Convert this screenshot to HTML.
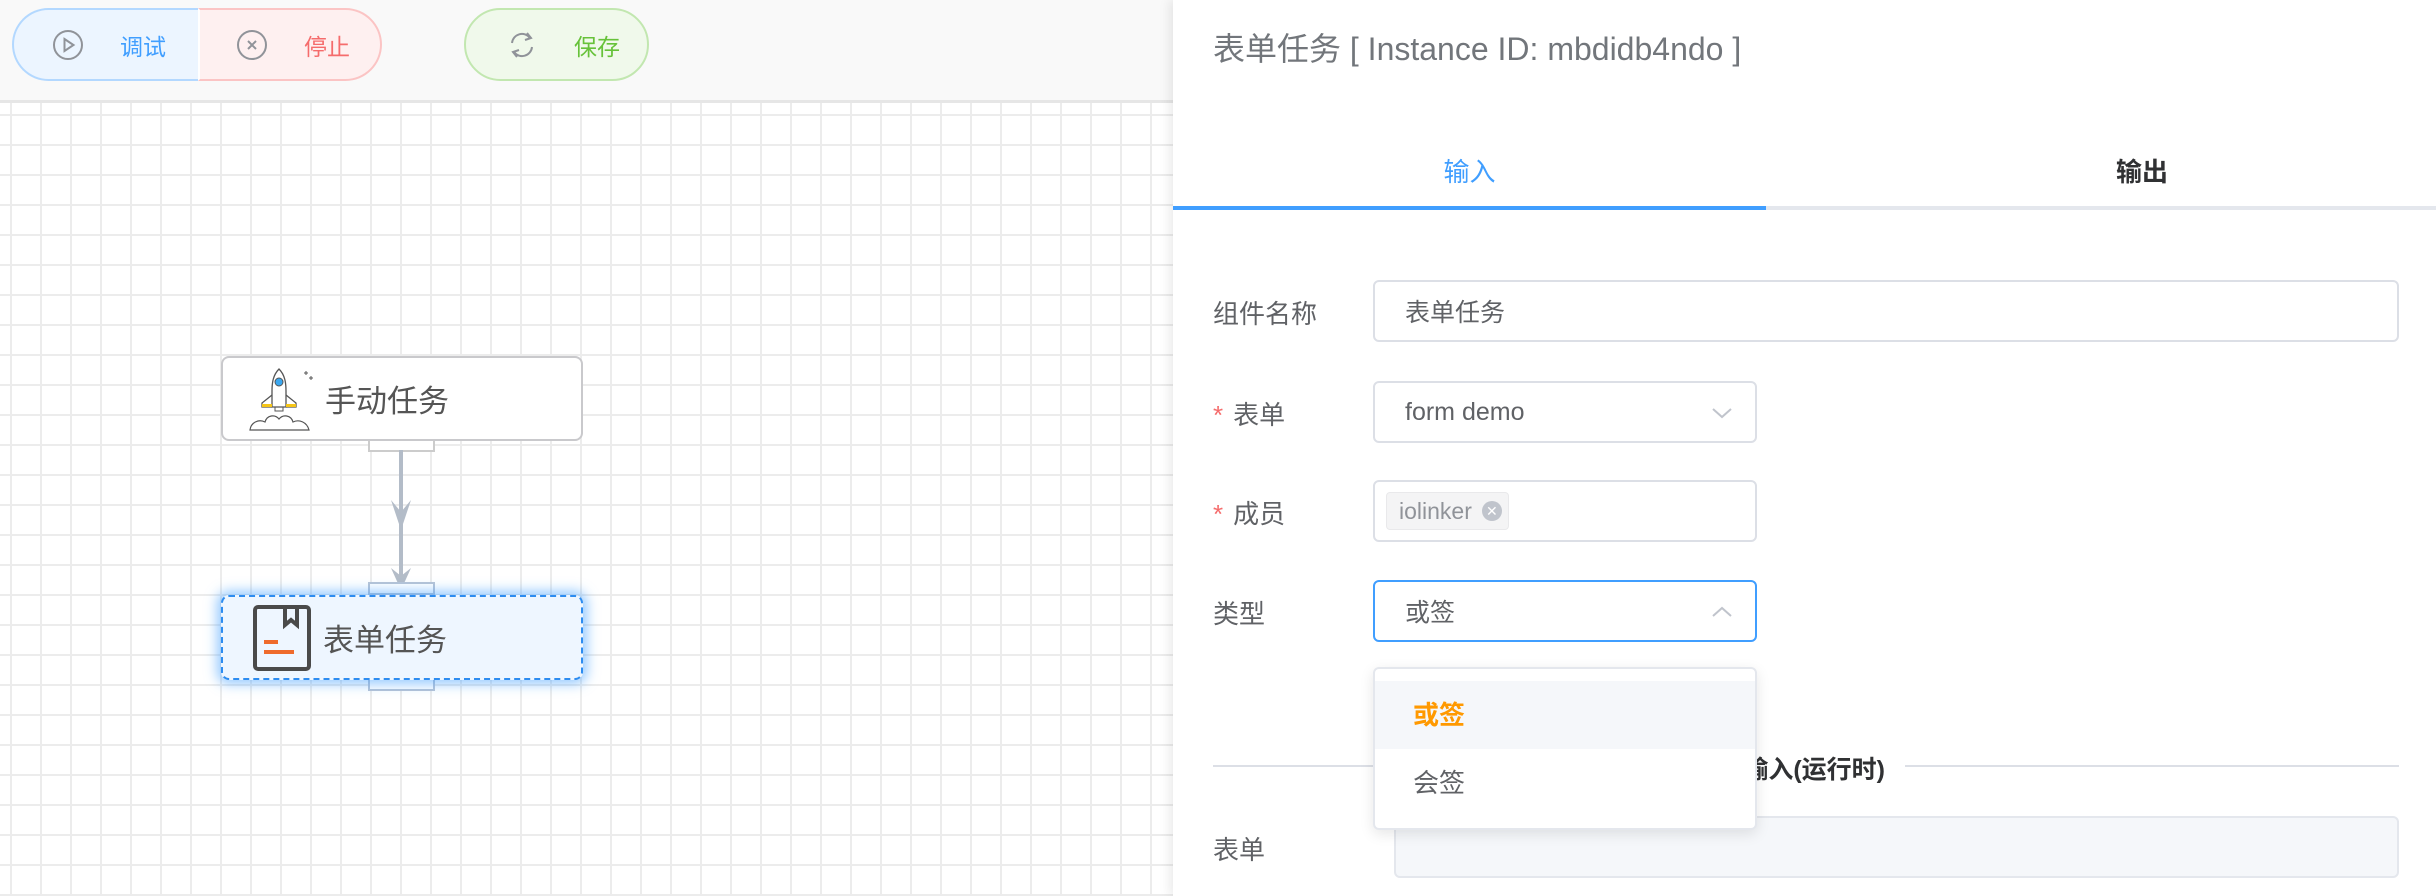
<!DOCTYPE html>
<html><head><meta charset="utf-8"><style>
*{box-sizing:border-box;margin:0;padding:0}
body{width:2436px;height:896px;overflow:hidden;position:relative;background:#fff;font-family:"Liberation Sans","Noto Sans CJK SC",sans-serif}
.abs{position:absolute}
#top{left:0;top:0;width:1173px;height:103px;background:#f9f9f9;border-bottom:3px solid #e6e6e6}
#grid{left:0;top:103px;width:1173px;height:793px;background-color:#fff;
background-image:linear-gradient(to right,#ececec 2px,transparent 2px),linear-gradient(to bottom,#ececec 2px,transparent 2px);
background-size:30px 30px;background-position:10px 11px}
.btn{height:73px;top:8px;display:flex;align-items:center;font-size:23px}
.node{left:221px;width:362px;height:85px;border-radius:8px;display:flex;align-items:center;font-size:31px;color:#555}
.conn{width:67px;height:13px;background:#fff;border:2px solid #ccc}
#panel{left:1173px;top:0;width:1263px;height:896px;background:#fff;box-shadow:-4px 0 10px rgba(0,0,0,.08)}
.lbl{font-size:26px;color:#606266}
.inp{border:2px solid #dcdfe6;border-radius:6px;background:#fff;font-size:25px;color:#606266;display:flex;align-items:center;padding-left:30px}
.star{color:#f56c6c;margin-right:10px}
</style></head><body>
<div id="top" class="abs"></div>
<div id="grid" class="abs"></div>

<div class="abs btn" style="left:12px;width:188px;background:#ecf5ff;border:2px solid #b3d8ff;border-right:none;border-radius:37px 0 0 37px;color:#409eff">
<svg style="margin-left:38px" width="32" height="32" viewBox="0 0 32 32"><circle cx="16" cy="16" r="14" fill="none" stroke="#909399" stroke-width="2"/><path d="M12.5 10 L21.5 16 L12.5 22Z" fill="none" stroke="#909399" stroke-width="2"/></svg>
<span style="margin-left:36px">调试</span></div>
<div class="abs btn" style="left:198px;width:184px;background:#fef0f0;border:2px solid #fbc4c4;border-left:2px solid #fff;border-radius:0 37px 37px 0;color:#f56c6c">
<svg style="margin-left:36px" width="32" height="32" viewBox="0 0 32 32"><circle cx="16" cy="16" r="14" fill="none" stroke="#909399" stroke-width="2"/><path d="M12 12L20 20M20 12L12 20" stroke="#909399" stroke-width="2"/></svg>
<span style="margin-left:36px">停止</span></div>
<div class="abs btn" style="left:464px;width:185px;background:#f0f9eb;border:2px solid #c2e7b0;border-radius:37px;color:#67c23a">
<svg style="margin-left:40px" width="32" height="32" viewBox="0 0 32 32"><path d="M6 14 A10 10 0 0 1 24 9 M26 18 A10 10 0 0 1 8 23" fill="none" stroke="#909399" stroke-width="2"/><path d="M21 4 L25 9 L19 11 M11 28 L7 23 L13 21" fill="none" stroke="#909399" stroke-width="2"/></svg>
<span style="margin-left:36px">保存</span></div>

<div class="abs conn" style="left:368px;top:439px"></div>
<svg class="abs" style="left:380px;top:450px" width="44" height="145"><line x1="21" y1="0" x2="21" y2="140" stroke="#b3bcc8" stroke-width="4"/><path d="M11 50 L21 80 L31 50 L21 62Z" fill="#b3bcc8"/><path d="M11 118 L21 140 L31 118 L21 126Z" fill="#b3bcc8"/></svg>
<div class="abs conn" style="left:368px;top:582px;border-color:#b7c4d6"></div>
<div class="abs conn" style="left:368px;top:678px;border-color:#b7c4d6"></div>

<div class="abs node" style="top:356px;background:#fff;border:2px solid #c9c9cc">
<svg style="margin-left:26px" width="66" height="64" viewBox="0 0 66 64"><path d="M30 2 C24 8 23 16 23 24 L23 40 L37 40 L37 24 C37 16 36 8 30 2Z" fill="#fff" stroke="#555" stroke-width="1.3"/><circle cx="30" cy="15" r="4" fill="#3aa7f0" stroke="#555"/><path d="M23 28 L13 36 L13 40 L23 40 M37 28 L47 36 L47 40 L37 40" fill="none" stroke="#555" stroke-width="1.3"/><rect x="13" y="37" width="10" height="3" fill="#f5c518"/><rect x="37" y="37" width="10" height="3" fill="#f5c518"/><rect x="26" y="40" width="8" height="4" fill="none" stroke="#555"/><path d="M1 63 C2 55 10 52 16 55 C18 48 26 47 30 52 C34 47 42 48 44 55 C50 52 58 55 60 63 Z" fill="none" stroke="#555" stroke-width="1.2"/><path d="M55 6h4M57 4v4M60 11h4M62 9v4" stroke="#555"/></svg>
<span style="margin-left:10px">手动任务</span></div>

<div class="abs node" style="top:595px;background:#eef6ff;border:2px dashed #2d8cf0;box-shadow:0 0 12px 4px rgba(64,158,255,.55)">
<svg style="margin-left:30px" width="58" height="66" viewBox="0 0 58 66"><rect x="2" y="2" width="54" height="62" rx="3" fill="none" stroke="#4a4a4a" stroke-width="4"/><path d="M32 2 L32 20 L38 15 L44 20 L44 2" fill="none" stroke="#4a4a4a" stroke-width="4"/><path d="M11 37h14M11 47h30" stroke="#ef6b2c" stroke-width="4"/></svg>
<span style="margin-left:12px">表单任务</span></div>

<div id="panel" class="abs">
<div class="abs" style="left:40px;top:24px;font-size:32px;color:#72767b;white-space:nowrap">表单任务 [ Instance ID: mbdidb4ndo ]</div>
<div class="abs" style="left:0;top:152px;width:593px;text-align:center;font-size:26px;color:#409eff">输入</div>
<div class="abs" style="left:869px;top:152px;width:200px;text-align:center;font-size:26px;color:#303133;font-weight:bold">输出</div>
<div class="abs" style="left:0;top:206px;width:1263px;height:4px;background:#e4e7ed"></div>
<div class="abs" style="left:0;top:206px;width:593px;height:4px;background:#409eff"></div>

<div class="abs lbl" style="left:40px;top:294px">组件名称</div>
<div class="abs inp" style="left:200px;top:280px;width:1026px;height:62px">表单任务</div>

<div class="abs lbl" style="left:40px;top:395px"><span class="star">*</span>表单</div>
<div class="abs inp" style="left:200px;top:381px;width:384px;height:62px">form demo
<svg class="abs" style="right:22px;top:23px" width="22" height="14"><path d="M2 3 L11 11 L20 3" fill="none" stroke="#c0c4cc" stroke-width="2"/></svg></div>

<div class="abs lbl" style="left:40px;top:494px"><span class="star">*</span>成员</div>
<div class="abs inp" style="left:200px;top:480px;width:384px;height:62px;padding-left:11px">
<div style="height:38px;background:#f4f4f5;border:1px solid #e9e9eb;border-radius:4px;font-size:23px;color:#909399;display:flex;align-items:center;padding:0 6px 0 12px">iolinker<span style="margin-left:10px;width:20px;height:20px;border-radius:50%;background:#c0c4cc;color:#fff;font-size:14px;display:flex;align-items:center;justify-content:center">✕</span></div></div>

<div class="abs lbl" style="left:40px;top:594px">类型</div>
<div class="abs inp" style="left:200px;top:580px;width:384px;height:62px;border-color:#409eff">或签
<svg class="abs" style="right:22px;top:23px" width="22" height="14"><path d="M2 11 L11 3 L20 11" fill="none" stroke="#c0c4cc" stroke-width="2"/></svg></div>

<div class="abs" style="left:40px;top:765px;width:1186px;height:2px;background:#dcdfe6"></div>
<div class="abs" style="left:540px;top:750px;width:192px;padding-right:20px;text-align:right;white-space:nowrap;background:#fff;font-size:25px;color:#303133;font-weight:bold">输入(运行时)</div>

<div class="abs lbl" style="left:40px;top:830px">表单</div>
<div class="abs" style="left:221px;top:816px;width:1005px;height:62px;background:#f5f7fa;border:2px solid #e4e7ed;border-radius:6px"></div>

<div class="abs" style="left:200px;top:667px;width:384px;height:163px;background:#fff;border:2px solid #e4e7ed;border-radius:6px;box-shadow:0 4px 14px rgba(0,0,0,.1)">
<div class="abs" style="left:0;top:12px;width:380px;height:68px;background:#f5f7fa;color:#ff9900;font-weight:bold;font-size:26px;padding:14px 0 0 38px">或签</div>
<div class="abs" style="left:38px;top:94px;color:#606266;font-size:26px">会签</div>
</div>
</div>
</body></html>
